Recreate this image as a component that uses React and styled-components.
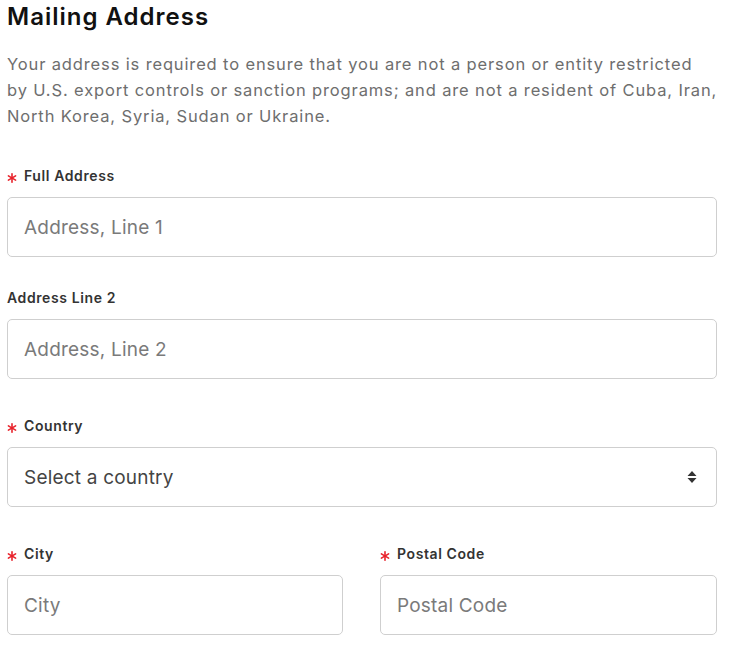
import React from "react";
import styled, { createGlobalStyle } from "styled-components";

const Global = createGlobalStyle`
  body {
    margin: 0;
    background: #fff;
    font-family: Inter, "Open Sans", sans-serif;
  }
  * { box-sizing: border-box; }
`;

const Container = styled.div`
  width: 724px;
  padding: 0 7px;
  .title {
    margin: 0;
    padding-top: 1px;
    font-size: 24px;
    line-height: 32px;
    font-weight: 600;
    color: #111;
    letter-spacing: 1px;
  }
  .intro {
    margin: 18px 0 0;
    font-size: 16.5px;
    line-height: 26px;
    color: #6e6e6e;
    letter-spacing: 0.86px;
    white-space: nowrap;
  }
`;

const Field = styled.div`
  display: flex;
  flex-direction: column;
  margin-top: ${(p) => p.top || 36}px;
`;

const Label = styled.label`
  display: flex;
  align-items: center;
  font-size: 14px;
  font-weight: 600;
  color: #333;
  height: 20px;
  letter-spacing: 0.6px;
  svg {
    margin: 6px 7px 0 0;
  }
`;

const Input = styled.input`
  margin-top: 12px;
  height: 60px;
  width: 100%;
  border: 1px solid #cfcfcf;
  border-radius: 5px;
  padding: 0 16px;
  font-family: inherit;
  font-size: 19px;
  letter-spacing: 0.2px;
  color: #444;
  outline: none;
  &::placeholder {
    color: #7a7a7a;
  }
`;

const SelectBox = styled.div`
  margin-top: 12px;
  height: 60px;
  border: 1px solid #cfcfcf;
  border-radius: 5px;
  padding: 0 19px 0 16px;
  display: flex;
  align-items: center;
  justify-content: space-between;
  font-size: 19px;
  letter-spacing: 0.2px;
  color: #444;
`;

const Row = styled.div`
  display: grid;
  grid-template-columns: 336px 337px;
  column-gap: 37px;
`;

const Star = () => (
  <svg width="10" height="10" viewBox="0 0 10 10">
    <g stroke="#e8222b" strokeWidth="1.6" strokeLinecap="round">
      <path d="M5 0.8 V9.2" />
      <path d="M1.4 2.9 L8.6 7.1" />
      <path d="M1.4 7.1 L8.6 2.9" />
    </g>
  </svg>
);

const Req = ({ children }) => (
  <Label>
    <Star />
    {children}
  </Label>
);

const App = () => {
  return (
    <>
      <Global />
      <Container>
        <h2 className="title">Mailing Address</h2>
        <p className="intro">
          Your address is required to ensure that you are not a person or entity restricted
          <br />
          by U.S. export controls or sanction programs; and are not a resident of Cuba, Iran,
          <br />
          North Korea, Syria, Sudan or Ukraine.
        </p>
        <Field top={36}>
          <Req>Full Address</Req>
          <Input placeholder="Address, Line 1" />
        </Field>
        <Field top={30}>
          <Label>Address Line 2</Label>
          <Input placeholder="Address, Line 2" />
        </Field>
        <Field>
          <Req>Country</Req>
          <SelectBox>
            <span>Select a country</span>
            <svg width="10" height="14" viewBox="0 0 10 14">
              <path d="M5 1 L9.5 6 H0.5 Z M0.5 8 H9.5 L5 13 Z" fill="#333" />
            </svg>
          </SelectBox>
        </Field>
        <Row>
          <Field>
            <Req>City</Req>
            <Input placeholder="City" />
          </Field>
          <Field>
            <Req>Postal Code</Req>
            <Input placeholder="Postal Code" />
          </Field>
        </Row>
      </Container>
    </>
  );
};

export default App;
